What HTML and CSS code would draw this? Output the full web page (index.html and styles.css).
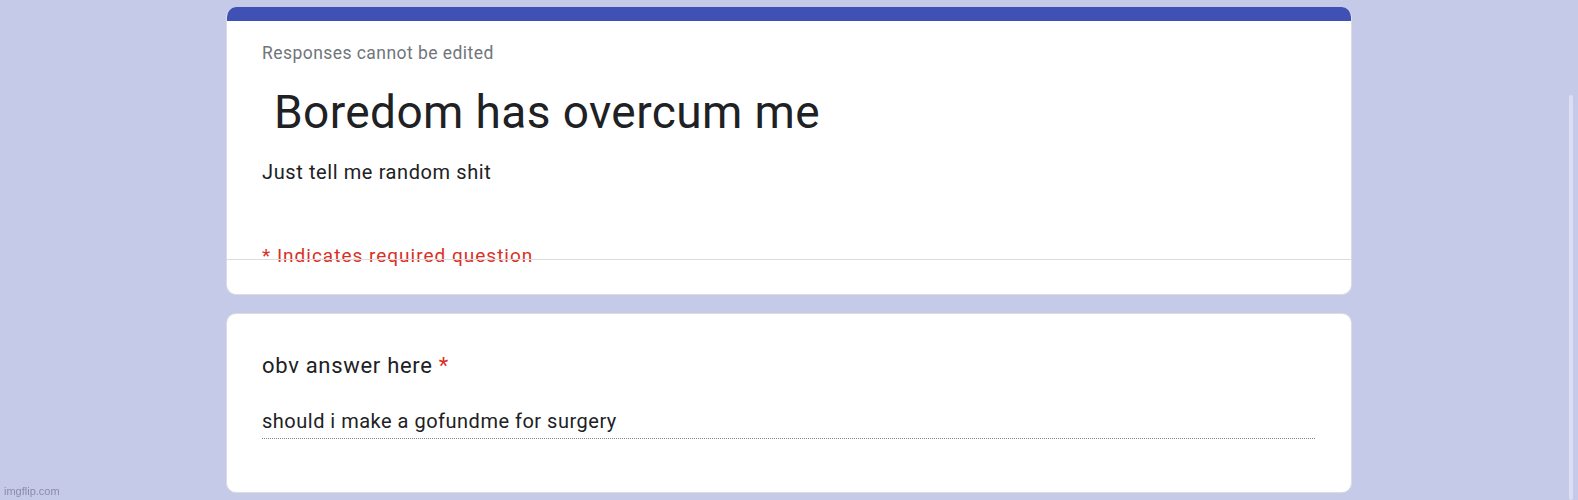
FILE: index.html
```html
<!DOCTYPE html>
<html lang="en">
<head>
    <meta charset="UTF-8">
    <meta name="viewport" content="width=device-width, initial-scale=1.0">
    <title>Boredom has overcum me</title>
    <link rel="stylesheet" href="styles.css">
</head>
<body>
    <div class="form">
        <div class="card card-header">
            <div class="strip"></div>
            <div class="header-body">
                <div class="notice">Responses cannot be edited</div>
                <h1 class="title">Boredom has overcum me</h1>
                <div class="description">Just tell me random shit</div>
                <div class="required-note">* Indicates required question</div>
            </div>
            <div class="divider"></div>
        </div>

        <div class="card card-question">
            <div class="question">obv answer here <span class="star">*</span></div>
            <div class="answer">should i make a gofundme for surgery</div>
        </div>
    </div>

    <div class="scrollbar"></div>
    <div class="watermark">imgflip.com</div>
</body>
</html>
```

FILE: styles.css
```css
body {
    margin: 0;
    padding: 7px 0 0;
    background-color: #c6cae9;
    font-family: Roboto, 'Noto Sans', Arial, sans-serif;
    color: #202124;
    height: 100vh;
    box-sizing: border-box;
    overflow: hidden;
}

.form {
    width: 1126px;
    margin-left: 226px;
    display: flex;
    flex-direction: column;
    gap: 18px;
}

.card {
    background: #fff;
    border: 1px solid #dadce0;
    border-radius: 10px;
    overflow: hidden;
}

.card-header {
    border-top: none;
}

.strip {
    height: 14px;
    background-color: #3f51b5;
}

.header-body {
    padding: 20px 36px 0 35px;
}

.notice {
    font-size: 17.5px;
    line-height: 24px;
    letter-spacing: 0.45px;
    color: #70757a;
}

.title {
    margin: 19px 0 0;
    padding-left: 12px;
    font-size: 46px;
    line-height: 56px;
    font-weight: 400;
    letter-spacing: 0.4px;
}

.description {
    margin-top: 18px;
    font-size: 20px;
    line-height: 28px;
    letter-spacing: 0.6px;
}

.required-note {
    margin-top: 57px;
    font-size: 19px;
    line-height: 26px;
    letter-spacing: 1px;
    color: #d93025;
}

.divider {
    position: relative;
    margin-top: -10px;
    margin-bottom: 34px;
    height: 1px;
    background-color: #dadce0;
}

.card-question {
    padding: 37px 36px 53px 35px;
}

.question {
    font-size: 22px;
    line-height: 30px;
    letter-spacing: 0.7px;
}

.star {
    color: #d93025;
}

.answer {
    margin-top: 26px;
    padding-bottom: 3px;
    font-size: 20px;
    line-height: 28px;
    letter-spacing: 0.5px;
    border-bottom: 1px dotted #80868b;
}

.scrollbar {
    position: fixed;
    top: 95px;
    bottom: 0;
    left: 1569px;
    width: 4px;
    border-radius: 2px;
    background-color: #dcdff3;
}

.watermark {
    position: fixed;
    left: 4px;
    bottom: 3px;
    font-family: 'Liberation Sans', Arial, sans-serif;
    font-size: 11px;
    line-height: 12px;
    color: #8a8da8;
}
```
